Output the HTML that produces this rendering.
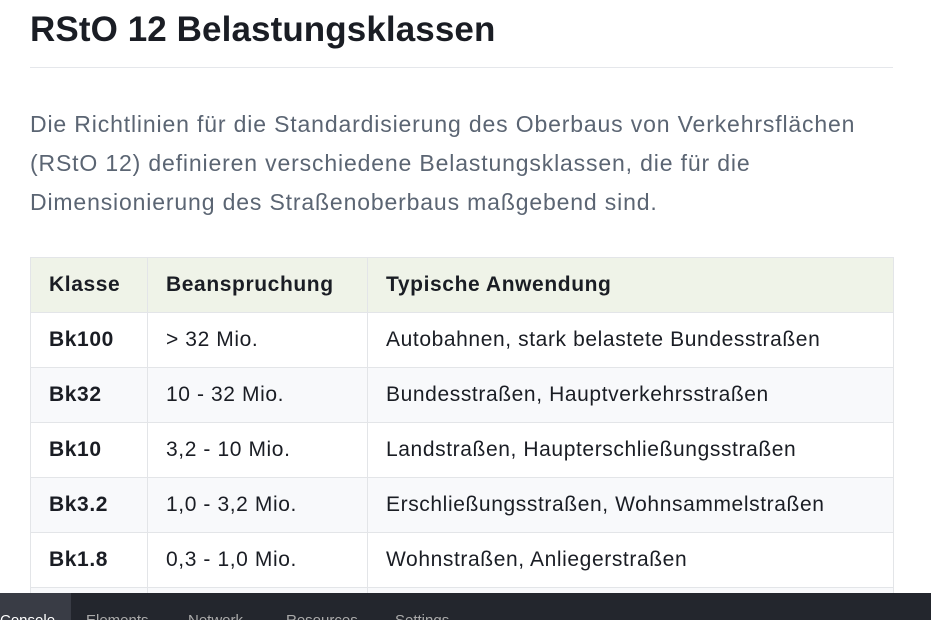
<!DOCTYPE html><html><head><style>
html,body{margin:0;width:931px;height:620px;overflow:hidden}
body{background:#fff;font-family:"Liberation Sans",sans-serif;color:#1a1d24;position:relative}
h1{position:absolute;left:30px;top:10px;margin:0;font-size:35px;font-weight:700;letter-spacing:0.1px}
.hr{position:absolute;left:30px;top:67px;width:863px;height:1px;background:#e5e7eb}
p{position:absolute;left:30px;top:105px;margin:0;width:900px;font-size:23px;line-height:39px;color:#5b6573;letter-spacing:0.85px}
table{position:absolute;left:30px;top:257px;border-collapse:collapse;width:864px;font-size:21px;letter-spacing:0.6px}
td,th{border:1px solid #e3e5e8;height:54px;padding:0 0 0 18px;text-align:left}
th{background:#eff3e8;font-weight:700}
td:first-child{font-weight:700}
tr:nth-child(odd) td{background:#f8f9fb}
.bar{position:absolute;left:0;top:593px;width:931px;height:27px;background:#23262d;color:#aaa;font-size:15px;overflow:hidden}
.bar span{position:absolute;top:19px}
</style></head><body>
<h1>RStO 12 Belastungsklassen</h1>
<div class="hr"></div>
<p>Die Richtlinien für die Standardisierung des Oberbaus von Verkehrsflächen<br>(RStO 12) definieren verschiedene Belastungsklassen, die für die<br>Dimensionierung des Straßenoberbaus maßgebend sind.</p>
<table>
<tr><th style="width:98px">Klasse</th><th style="width:201px">Beanspruchung</th><th>Typische Anwendung</th></tr>
<tr><td>Bk100</td><td>&gt; 32 Mio.</td><td>Autobahnen, stark belastete Bundesstraßen</td></tr>
<tr><td>Bk32</td><td>10 - 32 Mio.</td><td>Bundesstraßen, Hauptverkehrsstraßen</td></tr>
<tr><td>Bk10</td><td>3,2 - 10 Mio.</td><td>Landstraßen, Haupterschließungsstraßen</td></tr>
<tr><td>Bk3.2</td><td>1,0 - 3,2 Mio.</td><td>Erschließungsstraßen, Wohnsammelstraßen</td></tr>
<tr><td>Bk1.8</td><td>0,3 - 1,0 Mio.</td><td>Wohnstraßen, Anliegerstraßen</td></tr>
<tr><td></td><td></td><td></td></tr>
</table>
<div class="bar"><div style="position:absolute;left:0;top:0;width:71px;height:27px;background:#393c45"></div>
<span style="left:0;color:#fff">Console</span><span style="left:86px">Elements</span><span style="left:188px">Network</span><span style="left:286px">Resources</span><span style="left:395px">Settings</span></div>
</body></html>
